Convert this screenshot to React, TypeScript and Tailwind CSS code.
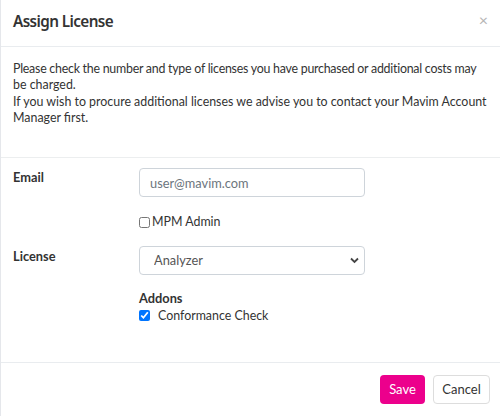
import { useState } from "react"

export default function App() {
  const [email, setEmail] = useState("")
  const [admin, setAdmin] = useState(false)
  const [license, setLicense] = useState("Analyzer")
  const [conformance, setConformance] = useState(true)

  return (
    <div className="w-[500px] h-[416px] bg-white border-l border-gray-200 flex flex-col text-[#333] font-['Lato',sans-serif]">
      {/* Header */}
      <div className="h-[47px] shrink-0 flex items-center justify-between pl-[12px] pr-[12px] border-b border-[#e9ecef]">
        <h2 className="font-['Noto_Sans',sans-serif] text-[15.3px] font-semibold tracking-[-0.6px] text-[#333] leading-none -mt-[3px]">
          Assign License
        </h2>
        <button className="text-[#b5b5b5] text-[16px] leading-none -mt-[6px]">×</button>
      </div>

      {/* Intro */}
      <div className="h-[111px] shrink-0 pl-[12px] pr-[4px] pt-[14px] text-[12.4px] leading-[16.4px] whitespace-nowrap border-b border-[#eceeef]">
        <p>
          <span className="tracking-[-0.25px]">
            Please check the number and type of licenses you have purchased or additional costs may
          </span>
          <br />
          be charged.
        </p>
        <p>
          If you wish to procure additional licenses we advise you to contact your Mavim Account
          <br />
          Manager first.
        </p>
      </div>

      {/* Form */}
      <div className="h-[205px] shrink-0 pl-[12px] pt-[10px] border-b border-[#e9ecef] text-[12.4px]">
        <div className="flex">
          <label className="w-[126px] font-bold text-[12.8px]">Email</label>
          <div className="flex flex-col">
            <input
              type="text"
              value={email}
              onChange={(e) => setEmail(e.target.value)}
              placeholder="user@mavim.com"
              className="w-[226px] h-[29px] border border-[#ced4da] rounded-[4px] px-[10px] text-[12.8px] placeholder:text-[#6c757d] outline-none"
            />
            <label className="flex items-center gap-[2px] mt-[16px]">
              <input
                type="checkbox"
                checked={admin}
                onChange={(e) => setAdmin(e.target.checked)}
                className="w-[11px] h-[11px] m-0"
              />
              MPM Admin
            </label>
          </div>
        </div>

        <div className="flex mt-[14px]">
          <label className="w-[126px] font-bold text-[12.8px] pt-[1px]">License</label>
          <div className="flex flex-col">
            <div className="relative w-[226px]">
              <select
                value={license}
                onChange={(e) => setLicense(e.target.value)}
                className="appearance-none w-[226px] h-[29px] border border-[#ced4da] rounded-[4px] pl-[14px] pr-[24px] text-[12.8px] text-[#555] bg-white outline-none"
              >
                <option>Analyzer</option>
                <option>Modeler</option>
                <option>Viewer</option>
              </select>
              <svg
                className="absolute right-[6px] top-[11px] pointer-events-none"
                width="9"
                height="7"
                viewBox="0 0 9 7"
                fill="none"
              >
                <path d="M1 1.5 L4.5 5 L8 1.5" stroke="#444" strokeWidth="1.8" />
              </svg>
            </div>
            <div className="font-bold text-[12.8px] mt-[15px] leading-[16px]">Addons</div>
            <label className="flex items-center gap-[8px] mt-[1px]">
              <input
                type="checkbox"
                checked={conformance}
                onChange={(e) => setConformance(e.target.checked)}
                className="w-[11px] h-[11px] m-0 accent-[#0075ff]"
              />
              Conformance Check
            </label>
          </div>
        </div>
      </div>

      {/* Footer */}
      <div className="flex-1 flex items-start justify-end gap-[8px] pr-[10px] pt-[12px] text-[13px]">
        <button className="w-[45px] h-[29px] rounded-[4px] bg-[#ec008c] text-white">Save</button>
        <button className="w-[57px] h-[29px] rounded-[4px] border border-[#ddd] bg-white text-[#333]">Cancel</button>
      </div>
    </div>
  )
}
